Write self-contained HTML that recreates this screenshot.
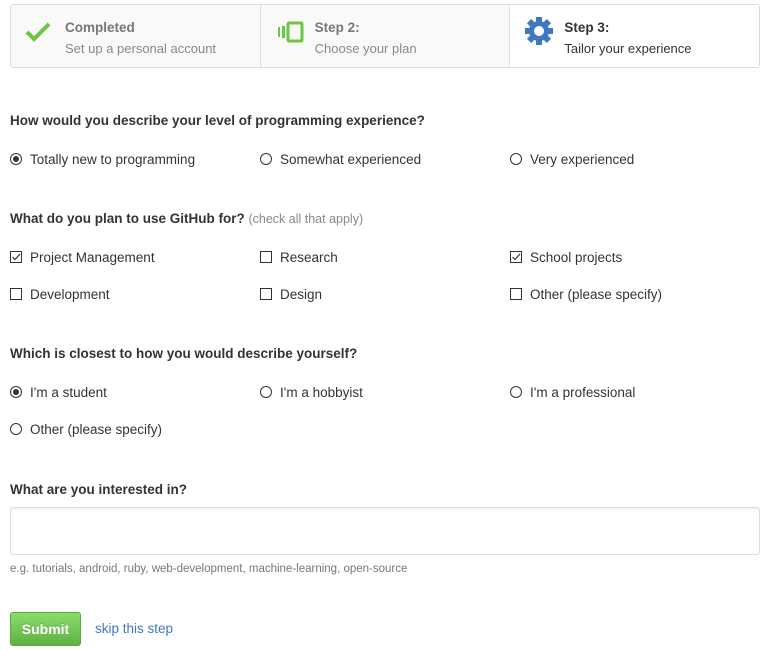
<!DOCTYPE html>
<html><head><meta charset="utf-8"><style>
body{margin:0;width:765px;height:650px;background:#fff;font-family:"Liberation Sans",sans-serif;color:#333;position:relative;overflow:hidden}
.a{position:absolute;white-space:nowrap}
.steps{position:absolute;left:10px;top:4px;width:748px;height:62px;border:1px solid #ddd;border-radius:3px;display:flex}
.st{flex:1;position:relative;background:#f9f9f9;border-right:1px solid #ddd}
.st:last-child{background:#fff;border-right:none}
.st b{position:absolute;left:54px;top:15px;font-size:13.5px;color:#777}
.st span{position:absolute;left:54px;top:36px;font-size:13px;color:#888}
.st:last-child b,.st:last-child span{color:#333}
.q{font-size:13.5px;font-weight:bold;color:#333;margin-top:1px}
.l{font-size:13.5px;color:#333;margin-top:1px}
.r{position:absolute;width:10px;height:10px;border:1px solid #333;border-radius:50%}
.r.on::after{content:"";position:absolute;left:2px;top:2px;width:6px;height:6px;border-radius:50%;background:#333}
.c{position:absolute;width:10px;height:10px;border:1px solid #333}
</style></head><body>
<div class="steps">
<div class="st"><svg class="a" style="left:14px;top:16px" width="26" height="22" viewBox="0 0 26 22"><path d="M2 11l7 7L24 3" fill="none" stroke="#6cc644" stroke-width="4"/></svg><b>Completed</b><span>Set up a personal account</span></div>
<div class="st"><svg class="a" style="left:14px;top:16px" width="30" height="22" viewBox="0 0 30 22"><rect x="13" y="2" width="14" height="18" rx="1" fill="none" stroke="#6cc644" stroke-width="3"/><rect x="7" y="5" width="3" height="12" fill="#6cc644"/><path d="M4 6v10" stroke="#6cc644" stroke-width="2"/></svg><b>Step 2:</b><span>Choose your plan</span></div>
<div class="st"><svg class="a" style="left:14px;top:11px" width="30" height="30" viewBox="0 0 30 30"><g fill="#4078c0"><circle cx="15" cy="15" r="10"/><rect x="12" y="1" width="6" height="28"/><rect x="1" y="12" width="28" height="6"/><rect x="12" y="1" width="6" height="28" transform="rotate(45 15 15)"/><rect x="12" y="1" width="6" height="28" transform="rotate(-45 15 15)"/></g><circle cx="15" cy="15" r="5" fill="#fff"/></svg><b>Step 3:</b><span>Tailor your experience</span></div>
</div>

<div class="a q" style="left:10px;top:112px">How would you describe your level of programming experience?</div>
<div class="r on" style="left:10px;top:153px"></div><div class="a l" style="left:30px;top:151px">Totally new to programming</div>
<div class="r" style="left:260px;top:153px"></div><div class="a l" style="left:280px;top:151px">Somewhat experienced</div>
<div class="r" style="left:510px;top:153px"></div><div class="a l" style="left:530px;top:151px">Very experienced</div>

<div class="a q" style="left:10px;top:210px">What do you plan to use GitHub for? <span style="font-weight:normal;color:#888;font-size:12.5px">(check all that apply)</span></div>
<div class="c" style="left:10px;top:251px"></div><svg class="a" style="left:10px;top:251px" width="12" height="12"><path d="M2.5 6l2.5 2.5L10 3" fill="none" stroke="#333" stroke-width="1.2"/></svg><div class="a l" style="left:30px;top:249px">Project Management</div>
<div class="c" style="left:260px;top:251px"></div><div class="a l" style="left:280px;top:249px">Research</div>
<div class="c" style="left:510px;top:251px"></div><svg class="a" style="left:510px;top:251px" width="12" height="12"><path d="M2.5 6l2.5 2.5L10 3" fill="none" stroke="#333" stroke-width="1.2"/></svg><div class="a l" style="left:530px;top:249px">School projects</div>
<div class="c" style="left:10px;top:288px"></div><div class="a l" style="left:30px;top:286px">Development</div>
<div class="c" style="left:260px;top:288px"></div><div class="a l" style="left:280px;top:286px">Design</div>
<div class="c" style="left:510px;top:288px"></div><div class="a l" style="left:530px;top:286px">Other (please specify)</div>

<div class="a q" style="left:10px;top:345px">Which is closest to how you would describe yourself?</div>
<div class="r on" style="left:10px;top:386px"></div><div class="a l" style="left:30px;top:384px">I'm a student</div>
<div class="r" style="left:260px;top:386px"></div><div class="a l" style="left:280px;top:384px">I'm a hobbyist</div>
<div class="r" style="left:510px;top:386px"></div><div class="a l" style="left:530px;top:384px">I'm a professional</div>
<div class="r" style="left:10px;top:423px"></div><div class="a l" style="left:30px;top:421px">Other (please specify)</div>

<div class="a q" style="left:10px;top:481px">What are you interested in?</div>
<div class="a" style="left:10px;top:507px;width:748px;height:46px;border:1px solid #ddd;border-radius:3px;box-shadow:inset 0 1px 2px rgba(0,0,0,.075)"></div>
<div class="a" style="left:10px;top:563px;font-size:11.5px;color:#777">e.g. tutorials, android, ruby, web-development, machine-learning, open-source</div>

<div class="a" style="left:10px;top:612px;width:69px;height:32px;border:1px solid #5ca941;border-radius:3px;background:linear-gradient(#8add6d,#60b044);color:#fff;font-size:14px;font-weight:bold;text-align:center;line-height:32px;text-shadow:0 -1px 0 rgba(0,0,0,.15)">Submit</div>
<div class="a" style="left:95px;top:621px;font-size:13.5px;color:#4078c0">skip this step</div>
</body></html>
